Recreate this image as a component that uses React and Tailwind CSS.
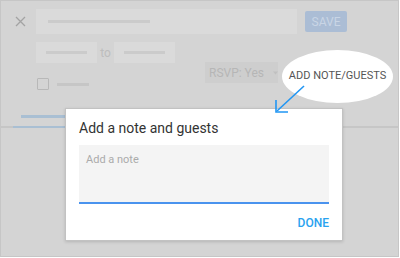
export default function App() {
  return (
    <div className="w-[400px] h-[258px] bg-white font-['Roboto',sans-serif]">
      <div className="relative w-[399px] h-[257px] border border-[#c6c6c6] bg-[#d4d4d4] overflow-hidden">
        {/* background form */}
        <div className="flex items-center pt-[8px] pl-[14px]">
          <svg width="11" height="11" viewBox="0 0 11 11" className="mr-[10px]">
            <path d="M1 1L10 10M10 1L1 10" stroke="#a3a3a3" strokeWidth="1.3" />
          </svg>
          <div className="w-[261px] h-[25px] bg-[#dadada] flex items-center pl-[12px]">
            <div className="w-[102px] h-[3px] bg-[#cbcbcb]" />
          </div>
          <div className="ml-[8px] w-[42px] h-[21px] rounded-[2px] bg-[#abbdd5] text-[#c9d5e5] text-[12px] flex items-center justify-center">
            SAVE
          </div>
        </div>

        <div className="flex pl-[35px] mt-[8px]">
          <div>
            <div className="flex items-center">
              <div className="w-[61px] h-[21px] bg-[#dadada] flex items-center justify-center">
                <div className="w-[41px] h-[3px] bg-[#cbcbcb]" />
              </div>
              <span className="w-[17px] text-center text-[12px] text-[#bdbdbd]">to</span>
              <div className="w-[61px] h-[21px] bg-[#dadada] flex items-center justify-center">
                <div className="w-[41px] h-[3px] bg-[#cbcbcb]" />
              </div>
            </div>
            <div className="flex items-center mt-[15px] ml-[1px]">
              <div className="w-[12px] h-[12px] border-[1.5px] border-[#b8b8b8] rounded-[1px]" />
              <div className="ml-[8px] w-[32px] h-[3px] bg-[#c6c6c6]" />
            </div>
          </div>
          <div className="ml-[30px] mt-[20px] w-[73px] h-[21px] bg-[#cecece] flex items-center pl-[4px] text-[12px] text-[#b6b6b6] whitespace-nowrap">
            RSVP: Yes
            <svg width="7" height="4" viewBox="0 0 7 4" className="ml-[9px]">
              <path d="M0 0L7 0L3.5 4Z" fill="#c0c0c0" />
            </svg>
          </div>
        </div>

        {/* tabs */}
        <div className="mt-[25px] ml-[20px] w-[46px] h-[3px] bg-[#a9bfd3]" />
        <div className="mt-[8px] relative h-[2px] bg-[#c6c6c6]">
          <div className="absolute left-[12px] top-0 w-[54px] h-[2px] bg-[#a9bfd3]" />
        </div>

        {/* callout ellipse */}
        <div className="absolute left-[281px] top-[49px] w-[111px] h-[53px] rounded-[50%] bg-white flex items-center justify-center text-[11px] text-[#555555] whitespace-nowrap">
          ADD NOTE/GUESTS
        </div>

        {/* dialog */}
        <div className="absolute left-[64px] top-[107px] w-[278px] h-[133px] bg-white border border-[#c2c2c2] shadow-[0_1px_3px_rgba(0,0,0,0.15)] px-[13px]">
          <div className="pt-[10px] text-[14px] text-[#333333] leading-[18px]">Add a note and guests</div>
          <div className="mt-[8px] h-[59px] bg-[#f4f4f4] border-b-2 border-[#4a93ee] px-[7px] pt-[7px] text-[11px] text-[#ababab]">
            Add a note
          </div>
          <div className="flex justify-end mt-[10px] text-[12px] font-medium text-[#29a2ef]">DONE</div>
        </div>

        {/* arrow */}
        <svg className="absolute left-[270px] top-[82px]" width="40" height="34" viewBox="0 0 40 34">
          <path d="M33 3L6 28" stroke="#2196f3" strokeWidth="1.6" />
          <path d="M5 17L5 29L17 29" stroke="#2196f3" strokeWidth="1.6" fill="none" />
        </svg>
      </div>
    </div>
  );
}
